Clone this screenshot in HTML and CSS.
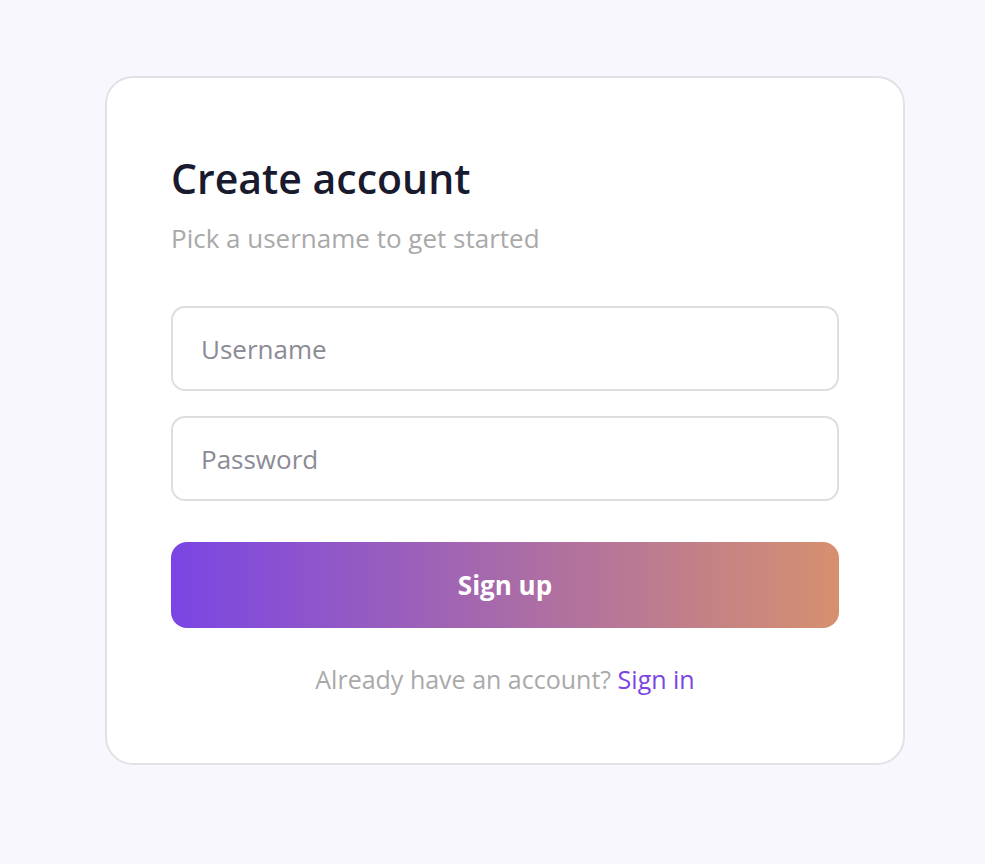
FILE: index.html
```html
<!DOCTYPE html>
<html lang="en">
<head>
<meta charset="utf-8">
<title>Create account</title>
<link rel="stylesheet" href="styles.css">
</head>
<body>
<main class="card">
  <h1 class="title">Create account</h1>
  <p class="subtitle">Pick a username to get started</p>
  <form class="form">
    <input class="field" type="text" placeholder="Username">
    <input class="field" type="password" placeholder="Password">
    <button class="submit" type="button">Sign up</button>
  </form>
  <p class="footer">Already have an account? <a class="link" href="#">Sign in</a></p>
</main>
</body>
</html>
```

FILE: styles.css
```css
* { box-sizing: border-box; }
html, body { margin: 0; }
body {
  background: #f8f7fd;
  font-family: "Open Sans", "Noto Sans", sans-serif;
  width: 985px;
  height: 864px;
}
.card {
  width: 800px;
  margin: 76px 0 0 105px;
  background: #fff;
  border: 2px solid #e2e2e6;
  border-radius: 28px;
  padding: 76px 64px 68px;
}
.title {
  margin: 0;
  font-size: 41px;
  line-height: 48px;
  font-weight: 600;
  color: #1a1a2e;
}
.subtitle {
  margin: 20px 0 0;
  font-size: 26px;
  line-height: 32px;
  color: #a9a9a9;
}
.form {
  margin-top: 52px;
  display: flex;
  flex-direction: column;
  gap: 25px;
}
.field {
  height: 85px;
  border: 2px solid #dedee2;
  border-radius: 14px;
  padding: 0 28px;
  font: inherit;
  font-size: 26px;
  color: #1a1a2e;
  background: #fff;
  outline: none;
}
.field::placeholder { color: #8b8b96; }
.submit {
  margin-top: 16px;
  height: 86px;
  border: 0;
  border-radius: 16px;
  background: linear-gradient(90deg, #7a45e4 0%, #d6906f 100%);
  color: #fff;
  font: inherit;
  font-size: 26px;
  font-weight: 700;
  cursor: pointer;
}
.footer {
  margin: 35px 0 0;
  text-align: center;
  font-size: 25px;
  line-height: 32px;
  color: #a9a9a9;
}
.link {
  color: #7b45e3;
  text-decoration: none;
}
```
